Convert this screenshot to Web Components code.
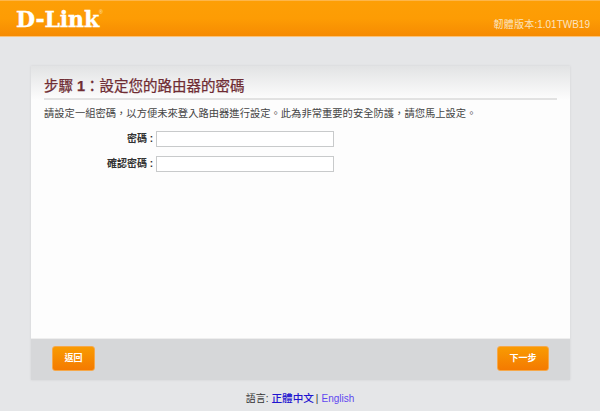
<!DOCTYPE html>
<html lang="zh-Hant"><head><meta charset="utf-8">
<style>
html,body{margin:0;padding:0;background:#e5e6e8;}
body{width:600px;height:411px;overflow:hidden;font-family:"Liberation Sans","Noto Sans CJK TC",sans-serif;}
</style></head>
<body>
<dl-app></dl-app>
<script>
function def(name, html, init){
  customElements.define(name, class extends HTMLElement{
    constructor(){super();this.attachShadow({mode:'open'}).innerHTML=html;}
    connectedCallback(){ if(init) init(this); }
  });
}
const F='"Liberation Sans","Noto Sans CJK TC",sans-serif';
def('dl-header',`<style>
:host{display:flex;justify-content:space-between;box-sizing:border-box;height:37px;padding:0 10px 0 16px;
background:linear-gradient(#fd9f06 0,#fd9c04 50%,#f68b02 100%);border-top:1px solid #fdb64a;border-bottom:1px solid #f9c27a;color:#fff;}
.logo{font:bold 22px/1 "DejaVu Serif",serif;letter-spacing:-.1px;margin-top:7px;display:flex;-webkit-text-stroke:.4px #fff;}
.logo i{font:normal 5px/1 "Liberation Sans";margin:2px 0 0 0;letter-spacing:0;-webkit-text-stroke:0;color:#ffe6c4;}
.ver{font:10px/14px ${F};color:#fbe4c0;margin-top:17px;white-space:nowrap;}
.ver span{letter-spacing:.25px;}
</style><div class="logo">D-Link<i>®</i></div><div class="ver"><span>韌體版本</span>:1.01TWB19</div>`);
def('dl-field',`<style>
:host{display:flex;align-items:center;height:17px;}
label{width:122px;text-align:right;font:bold 10px/17px ${F};color:#333;margin-right:3px;white-space:nowrap;}
.in{box-sizing:border-box;width:178px;height:16px;background:#fff;border:1px solid #c8cacb;}
</style><label><slot></slot></label><div class="in"></div>`);
def('dl-button',`<style>
:host{display:flex;align-items:center;justify-content:center;box-sizing:border-box;height:25px;border-radius:3px;
background:linear-gradient(#f99b02,#f47a01);border:1px solid #f6a84a;color:#fff;font:bold 9px/1 ${F};}
</style><slot></slot>`);
def('dl-card',`<style>
:host{display:flex;flex-direction:column;box-sizing:border-box;width:539px;height:314px;margin:29px 0 0 31px;background:#fdfdfd;
box-shadow:0 0 2px #cfd0d2;}
.head{height:34px;box-sizing:border-box;background:linear-gradient(#e2e3e4,#fdfdfd);padding:0 13px;}
.title{height:34px;box-sizing:border-box;border-bottom:2px solid #e2e2e2;font:14.5px/40px ${F};color:#6f2c33;white-space:nowrap;-webkit-text-stroke:.25px #6f2c33;}
.title b{font-weight:bold;}
.desc{margin:7px 0 0 13px;font:10.3px/14px ${F};color:#444;white-space:nowrap;}
.form{display:flex;flex-direction:column;gap:8px;margin-top:9px;flex:1;}
.foot{height:42px;flex:none;background:#d6d7d9;border-top:1px solid #eeeeee;box-sizing:border-box;display:flex;justify-content:space-between;align-items:center;padding:0 21px 2px;}
</style>
<div class="head"><div class="title">步驟 <b>1</b>：設定您的路由器的密碼</div></div>
<div class="desc">請設定一組密碼，以方便未來登入路由器進行設定。此為非常重要的安全防護，請您馬上設定。</div>
<div class="form"><dl-field>密碼 :</dl-field><dl-field>確認密碼 :</dl-field></div>
<div class="foot"><dl-button style="width:43px">返回</dl-button><dl-button style="width:52px">下一步</dl-button></div>`);
def('dl-lang',`<style>
:host{display:flex;justify-content:center;align-items:baseline;margin-top:11px;font:10px/14px ${F};color:#333;white-space:pre;}
b{color:#1f14d0;font-size:10.6px;font-weight:500;margin-left:3px;}.s{margin:0 3px 0 2px;}span.e{color:#5f46f0;}
</style><span>語言:</span><b>正體中文</b><span class="s">|</span><span class="e">English</span>`);
def('dl-app',`<style>:host{display:block;width:600px;height:411px;}</style><dl-header></dl-header><dl-card></dl-card><dl-lang></dl-lang>`);
</script>
</body></html>
